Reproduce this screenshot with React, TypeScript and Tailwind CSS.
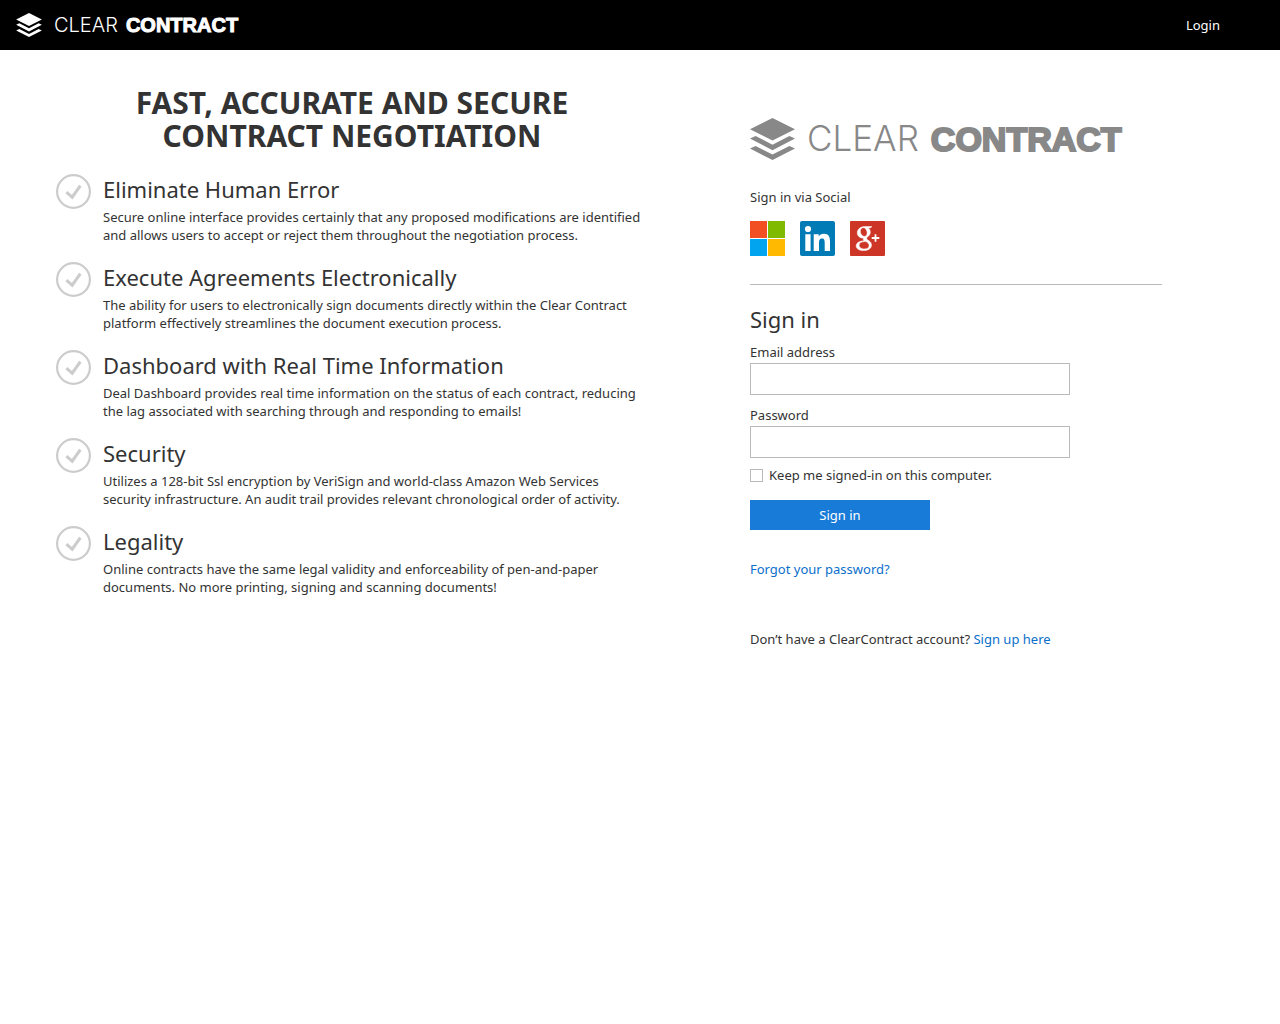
import { useState } from "react";

interface Feature {
  title: string;
  lines: string[];
}

const features: Feature[] = [
  {
    title: "Eliminate Human Error",
    lines: [
      "Secure online interface provides certainly that any proposed modifications are identified",
      "and allows users to accept or reject them throughout the negotiation process.",
    ],
  },
  {
    title: "Execute Agreements Electronically",
    lines: [
      "The ability for users to electronically sign documents directly within the Clear Contract",
      "platform effectively streamlines the document execution process.",
    ],
  },
  {
    title: "Dashboard with Real Time Information",
    lines: [
      "Deal Dashboard provides real time information on the status of each contract, reducing",
      "the lag associated with searching through and responding to emails!",
    ],
  },
  {
    title: "Security",
    lines: [
      "Utilizes a 128-bit Ssl encryption by VeriSign and world-class Amazon Web Services",
      "security infrastructure. An audit trail provides relevant chronological order of activity.",
    ],
  },
  {
    title: "Legality",
    lines: [
      "Online contracts have the same legal validity and enforceability of pen-and-paper",
      "documents. No more printing, signing and scanning documents!",
    ],
  },
];

function LayersIcon({ className }: { className?: string }) {
  return (
    <svg viewBox="0 0 45 42" fill="currentColor" className={className} aria-hidden="true">
      <path d="M22.5 0 45 11.3 22.5 22.6 0 11.3z" />
      <path d="M0 20.6 5.6 18 22.5 26.8 39.4 18 45 20.6 22.5 32.2z" />
      <path d="M0 30.6 5.6 28 22.5 36.6 39.4 28 45 30.6 22.5 42z" />
    </svg>
  );
}

function CheckIcon() {
  return (
    <svg viewBox="0 0 35 35" fill="none" stroke="#cccccc" className="size-[35px] shrink-0" aria-hidden="true">
      <circle cx="17.5" cy="17.5" r="16.4" strokeWidth="2.2" />
      <path d="M10.4 18.2 16.2 23.2 24.4 11.6" strokeWidth="3" />
    </svg>
  );
}

function MicrosoftIcon() {
  return (
    <svg viewBox="0 0 35 35" className="size-[35px]" aria-hidden="true">
      <path fill="#f25022" d="M0 0h17v17H0z" />
      <path fill="#7fba00" d="M18 0h17v17H18z" />
      <path fill="#00a4ef" d="M0 18h17v17H0z" />
      <path fill="#ffb900" d="M18 18h17v17H18z" />
    </svg>
  );
}

function LinkedinIcon() {
  return (
    <svg viewBox="0 0 35 35" className="size-[35px]" aria-hidden="true">
      <rect width="35" height="35" rx="2" fill="#007bb6" />
      <circle cx="8" cy="8" r="3.1" fill="#fff" />
      <path
        fill="#fff"
        d="M5.3 13.2h5.3V30H5.3zM13.7 13.2h5v2.3c.8-1.5 2.6-2.8 5.2-2.8 5 0 6.1 3.3 6.1 7.9V30h-5.3v-8.3c0-2.1-.3-4.2-2.7-4.2-2.5 0-3 2-3 4.2V30h-5.3z"
      />
    </svg>
  );
}

function GooglePlusIcon() {
  return (
    <svg viewBox="0 0 35 35" className="size-[35px]" aria-hidden="true">
      <rect width="35" height="35" rx="1" fill="#cd3627" />
      <path
        fill="#fff"
        stroke="#fff"
        strokeWidth="0.5"
        fillRule="evenodd"
        d="M14.8 5.6h7.2l-1.8 1.3h-2c1.4 1 2.1 2.5 2.1 4.3 0 2-1 3.3-2.3 4.3-1 .8-1.3 1.2-1.3 1.9s.7 1.3 1.6 1.9c2.2 1.5 3.2 2.7 3.2 4.9 0 2.9-2.9 5.3-8 5.3-4.5 0-7.3-1.8-7.3-4.5 0-3 3-5 7.8-5.2-.6-.6-.8-1.1-.8-1.7 0-.4.1-.7.3-1-3.7.2-6.2-2.2-6.2-5.4 0-3.4 3.3-6.1 7.5-6.1zM13.3 6.7c-2 0-3.3 1.8-2.9 4.4.4 2.5 2 4.3 3.9 4.3 2 0 3.2-1.7 2.8-4.3-.4-2.5-1.9-4.4-3.8-4.4zM14.7 20.6c-3.5 0-5.6 1.4-5.6 3.6 0 2.3 2 3.8 5 3.8 3.3 0 5-1.3 5-3.3 0-1.7-.9-2.5-3-4.1z"
      />
      <path stroke="#fff" strokeWidth="1.8" d="M25.5 13.2v7.6M21.7 17h7.6" />
    </svg>
  );
}

const socials = [
  { name: "Microsoft", Icon: MicrosoftIcon },
  { name: "LinkedIn", Icon: LinkedinIcon },
  { name: "Google Plus", Icon: GooglePlusIcon },
];

function Header() {
  return (
    <header className="flex h-[50px] items-center justify-between bg-black pr-[60px] pl-4 text-white">
      <a href="#" className="flex items-center gap-3">
        <LayersIcon className="h-6 w-[26px]" />
        <span className="flex items-baseline gap-2 text-[20px] leading-6">
          <span className="font-['Inter',sans-serif] font-light">CLEAR</span>
          <span className="font-['Liberation_Sans',sans-serif] font-bold [-webkit-text-stroke:1px]">CONTRACT</span>
        </span>
      </a>
      <a href="#login">Login</a>
    </header>
  );
}

function FeatureItem({ title, lines }: Feature) {
  return (
    <li className="flex gap-3">
      <CheckIcon />
      <div>
        <h2 className="text-[22px] leading-[30px]">{title}</h2>
        <p className="mt-1">
          {lines.map((line) => (
            <span key={line} className="lg:block">
              {line}{" "}
            </span>
          ))}
        </p>
      </div>
    </li>
  );
}

function SignInForm() {
  const [email, setEmail] = useState("");
  const [password, setPassword] = useState("");
  const [remember, setRemember] = useState(false);

  return (
    <form onSubmit={(e) => e.preventDefault()}>
      <h2 className="mt-[19px] text-[22px] leading-[30px]">Sign in</h2>
      <label htmlFor="email" className="mt-[9px] block">
        Email address
      </label>
      <input
        id="email"
        type="email"
        value={email}
        onChange={(e) => setEmail(e.target.value)}
        className="mt-0.5 block h-8 w-full max-w-80 border border-[#bababa] px-2 outline-none"
      />
      <label htmlFor="password" className="mt-[11px] block">
        Password
      </label>
      <input
        id="password"
        type="password"
        value={password}
        onChange={(e) => setPassword(e.target.value)}
        className="mt-0.5 block h-8 w-full max-w-80 border border-[#bababa] px-2 outline-none"
      />
      <div className="mt-2 flex items-center gap-1.5">
        <input
          id="remember"
          type="checkbox"
          checked={remember}
          onChange={(e) => setRemember(e.target.checked)}
          className="size-[13px] appearance-none border border-[#bababa] checked:bg-[#197bd8]"
        />
        <label htmlFor="remember">Keep me signed-in on this computer.</label>
      </div>
      <button type="submit" className="mt-4 block h-[30px] w-[180px] bg-[#197bd8] text-white">
        Sign in
      </button>
    </form>
  );
}

export default function App() {
  return (
    <div className="min-h-screen bg-white font-['Noto_Sans','Open_Sans',sans-serif] text-[13px] leading-[18px] text-[#333333]">
      <Header />
      <main className="grid gap-[102px] px-14 pt-9 lg:grid-cols-[592fr_412fr] lg:pr-[118px]">
        <section>
          <h1 className="text-center text-[30px] leading-[33px] font-bold">
            FAST, ACCURATE AND SECURE
            <br />
            CONTRACT NEGOTIATION
          </h1>
          <ul className="mt-[22px] flex flex-col gap-[18px]">
            {features.map((feature) => (
              <FeatureItem key={feature.title} {...feature} />
            ))}
          </ul>
        </section>

        <section className="pt-[31px]">
          <div className="flex items-center gap-3 text-[#888888]">
            <LayersIcon className="h-[42px] w-[45px] shrink-0" />
            <span className="flex items-baseline gap-3 leading-[42px]">
              <span className="font-['Inter',sans-serif] text-[35px] font-light">CLEAR</span>
              <span className="font-['Liberation_Sans',sans-serif] text-[34px] font-bold [-webkit-text-stroke:2px]">
                CONTRACT
              </span>
            </span>
          </div>

          <p className="mt-7">Sign in via Social</p>
          <div className="mt-[15px] flex gap-[15px]">
            {socials.map(({ name, Icon }) => (
              <button key={name} type="button" aria-label={`Sign in with ${name}`}>
                <Icon />
              </button>
            ))}
          </div>

          <hr className="mt-7 border-[#bababa]" />
          <SignInForm />

          <a href="#forgot" className="mt-[30px] block text-[#0b6fcb]">
            Forgot your password?
          </a>
          <p className="mt-[52px]">
            Don’t have a ClearContract account?{" "}
            <a href="#signup" className="text-[#0b6fcb]">
              Sign up here
            </a>
          </p>
        </section>
      </main>
    </div>
  );
}
